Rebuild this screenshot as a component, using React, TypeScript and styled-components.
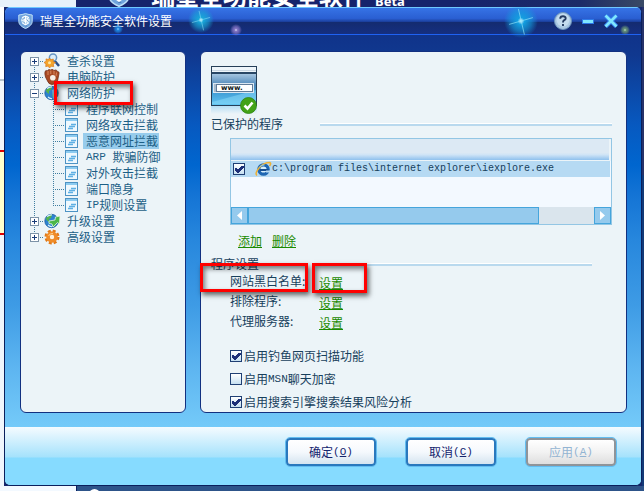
import React from "react";
import styled, { createGlobalStyle, css } from "styled-components";

const GlobalStyle = createGlobalStyle`
  * { box-sizing: border-box; }
  body {
    margin: 0;
    font: 12px/16px "Liberation Sans", "Noto Sans CJK SC", sans-serif;
    color: #17405c;
  }
  button, input { font: inherit; margin: 0; padding: 0; }
`;

const cjk = `"Noto Sans CJK SC", sans-serif`;

/* ---------- desktop behind the dialog ---------- */

const Desktop = styled.div`
  display: grid;
  grid-template-rows: 7px 1fr 5px;
  min-height: 100vh;
  background: #16266c;
`;

const BackStrip = styled.div`
  display: flex;
  align-items: flex-end;
  overflow: hidden;
  height: 7px;
  padding-left: 105px;
  background: linear-gradient(90deg, #e6f1fa 0 76px, #16236c 76px 70%, #1c2b68 90%, #3a4a66);
`;

const BackTitle = styled.span`
  margin-left: 18px;
  font: bold 24px/24px ${cjk};
  color: #fff;
  white-space: nowrap;
`;

const BackBeta = styled.span`
  margin-left: 8px;
  font: bold 13px/12px "Noto Sans", sans-serif;
  color: #fff;
`;

const Middle = styled.div`
  display: flex;
  padding: 0 2px 0 4px;
  background:
    linear-gradient(180deg, #fff 0 72px, #b8c4cc 72px 74px, #f2f6fa 74px 143px, #e00000 143px 145px, #ffffcc 145px 226px, #e00000 226px 228px, #f0f6fc 228px) left / 4px 100% no-repeat,
    linear-gradient(180deg, #27336a 0 35%, #123a78 35%) right / 2px 100% no-repeat;
`;

const BottomStrip = styled.div`
  overflow: hidden;
  height: 5px;
  padding-left: 89px;
  background: linear-gradient(90deg, #f3f9ff 0 76px, #0a2060 76px 77px, #2d5389 77px);
`;

const Bead = styled.span`
  display: block;
  width: 11px;
  height: 11px;
  margin-top: 3px;
  border-radius: 50%;
  background: #fff;
`;

/* ---------- dialog ---------- */

const Dialog = styled.section`
  display: flex;
  flex: 1;
  flex-direction: column;
  min-width: 0;
  border: 1px solid #0a1f5c;
  border-top: 0;
  border-radius: 6px;
  overflow: hidden;
  background: #86dbff;
`;

const TitleBar = styled.header`
  position: relative;
  display: flex;
  align-items: center;
  height: 28px;
  padding: 0 23px 0 13px;
  border-top: 1px solid #6fc8ff;
  border-bottom: 1px solid #1f62f2;
  background: linear-gradient(180deg, #3673e6, #2a5fd2 40%, #1c419f 52%, #142b6f 53%, #152f80);
`;

const Title = styled.h1`
  flex: 1;
  margin: 0 0 0 7px;
  font: 12px/16px ${cjk};
  color: #fff;
`;

const WindowButtons = styled.div`
  display: flex;
  align-items: center;
  gap: 10px;
  z-index: 1;
`;

const IconButton = styled.button`
  display: flex;
  border: 0;
  background: none;
  color: #7fe6ff;
`;

const Sparkle = styled.svg<{ $x: string; $top: number }>`
  position: absolute;
  left: ${(p) => p.$x};
  top: ${(p) => p.$top}px;
`;

const Body = styled.div`
  display: flex;
  flex: 1;
  gap: 14px;
  padding: 16px 14px 14px 15px;
  background: linear-gradient(180deg, #10338a 0, #10388f 20px, #0759c0 90px, #0066cf 130px, #1474d5 160px, #2787dd 205px, #3e9be5 270px, #5cb4f0 330px, #74caf9 392px);
`;

const panel = css`
  border: 1px solid #123080;
  border-radius: 6px;
  background: #ecf4f8;
`;

const Sidebar = styled.nav`
  ${panel}
  flex: none;
  width: 166px;
  padding: 1px 0 0 9px;
`;

const Content = styled.main`
  ${panel}
  flex: 1;
  min-width: 0;
  padding: 14px 14px 0 10px;
`;

/* ---------- tree ---------- */

const Tree = styled.ul`
  margin: 0;
  padding: 0;
  list-style: none;
`;

type Reach = "top" | "bottom" | "full";
const dotsDown = "repeating-linear-gradient(180deg, #3f7da0 0 1px, transparent 1px 2px)";
const dotsAcross = "repeating-linear-gradient(90deg, #3f7da0 0 1px, transparent 1px 2px)";

const TreeRow = styled.li`
  position: relative;
  display: flex;
  align-items: center;
  height: 16px;
  color: #1c5f86;
  font-family: ${cjk};
  white-space: nowrap;
`;

const Guide = styled.span<{ $reach: Reach; $width: number; $branch?: boolean; $x: number }>`
  display: flex;
  align-items: center;
  flex: none;
  width: ${(p) => p.$width}px;
  height: 16px;
  background:
    ${dotsDown} ${(p) => p.$x}px ${(p) => (p.$reach === "bottom" ? "8px" : "0")} / 1px
      ${(p) => ({ top: "8px", bottom: "8px", full: "16px" })[p.$reach]} no-repeat,
    ${dotsAcross} ${(p) => p.$x}px 8px / ${(p) => (p.$branch ? "20px" : "0")} 1px no-repeat;
`;

const Expander = styled.button`
  display: flex;
  width: 9px;
  height: 9px;
  border: 1px solid #7d93a8;
  background: #fff;
  color: #1a3c78;
`;

const TreeLabel = styled.a<{ $child?: boolean; $active?: boolean }>`
  display: flex;
  align-items: center;
  height: 16px;
  margin-left: ${(p) => (p.$child ? 5 : 3)}px;
  padding: 0 1px 0 3px;
  background: ${(p) => (p.$active ? "#97ccec" : "transparent")};
  color: inherit;
  text-decoration: none;
`;

const Latin = styled.span`
  font: 11px/12px "Liberation Mono", monospace;
`;

/* Red rectangle drawn over whatever it surrounds. */
const Highlight = styled.span<{ $left: number; $top: number; $width: number; $height: number }>`
  position: absolute;
  left: ${(p) => p.$left}px;
  top: ${(p) => p.$top}px;
  width: ${(p) => p.$width}px;
  height: ${(p) => p.$height}px;
  border: 3px solid #ff0000;
  box-shadow: 2px 3px 5px rgba(0, 0, 0, 0.6), inset 2px 3px 5px rgba(0, 0, 0, 0.5);
  pointer-events: none;
  z-index: 2;
`;

/* ---------- content ---------- */

const PictureRow = styled.div`
  display: flex;
  height: 48px;
`;

const Heading = styled.h2<{ $top: number; $end?: number }>`
  display: flex;
  align-items: center;
  gap: 37px;
  margin: ${(p) => p.$top}px ${(p) => p.$end ?? 0}px 0 0;
  font: 12px/16px ${cjk};

  &::after {
    content: "";
    flex: 1;
    height: 2px;
    border-top: 1px solid #fff;
    background: #b9d9ee;
  }
`;

const HeadingText = styled.span`
  width: 72px;
`;

const Indented = styled.div`
  margin-left: 19px;
`;

const ListBox = styled.div`
  display: flex;
  flex-direction: column;
  height: 87px;
  margin-top: 6px;
  border: 1px solid #93c6e4;
  background: #f3f9ff;
`;

const ProgramTable = styled.table`
  width: 100%;
  border-collapse: collapse;

  th {
    height: 21px;
    padding: 0;
    border-right: 2px solid #ecf4f8;
    border-bottom: 1px solid #ecf4f8;
    background: linear-gradient(180deg, #dce9f4 0 65%, #cfe4f6 75%, #8fc1ee);
  }
  td {
    height: 16px;
    padding: 0;
    background: #b6daf3;
  }
`;

const ProgramLabel = styled.label`
  display: flex;
  align-items: center;
  height: 16px;
  padding-left: 2px;
  font: 10px/16px "Liberation Mono", monospace;
  white-space: nowrap;

  svg { margin: 0 0 0 10px; }
`;

const CheckBox = styled.input`
  appearance: none;
  flex: none;
  width: 12px;
  height: 12px;
  border: 1px solid #1f3f74;
  background: linear-gradient(180deg, #fff, #c6e0f2);

  &:checked {
    background:
      linear-gradient(45deg, transparent 25%, #1c2f78 25% 75%, transparent 75%) 1px 4px / 4px 4px no-repeat,
      linear-gradient(135deg, transparent 34%, #1c2f78 34% 62%, transparent 62%) 3px 2px / 7px 7px no-repeat,
      linear-gradient(180deg, #fff, #c6e0f2);
  }
`;

const ScrollBar = styled.div`
  display: flex;
  height: 17px;
  margin-top: auto;
  background: #dae5ed;
`;

const scrollPiece = css`
  border: 1px solid #45a5dc;
  background: #95caed;
`;

const ScrollButton = styled.button`
  ${scrollPiece}
  display: flex;
  align-items: center;
  justify-content: center;
  width: 17px;
`;

const ScrollTrack = styled.div`
  flex: 1;
`;

const ScrollThumb = styled.div`
  ${scrollPiece}
  width: 84%;
  height: 17px;
`;

const Link = styled.a`
  height: 15px;
  border-bottom: 1px solid #1a8a00;
  font: 12px/15px ${cjk};
  color: #1a8a00;
  text-decoration: none;
`;

const LinkRow = styled.div`
  display: flex;
  gap: 10px;
  height: 16px;
  margin: 8px 0 0 27px;
`;

const Setting = styled.div`
  position: relative;
  display: grid;
  grid-template-columns: 89px auto;
  justify-content: start;
  align-items: center;
  height: 20px;
  font-family: ${cjk};
`;

const SettingName = styled.span`
  line-height: 16px;
  margin-bottom: 2px;
`;

const Options = styled.div`
  display: grid;
  gap: 7px;
  margin-top: 16px;
`;

const Option = styled.label`
  display: flex;
  align-items: center;
  gap: 2px;
  height: 16px;
  font-family: ${cjk};
`;

const OptionText = styled.span`
  display: flex;
  align-items: center;
`;

/* ---------- footer ---------- */

const Footer = styled.footer`
  display: flex;
  justify-content: flex-end;
  gap: 30px;
  height: 58px;
  padding: 11px 25px 0 0;
  background: linear-gradient(180deg, #f5fbff, #a5e2fc 30px, #86dbff 31px);
`;

const PushButton = styled.button`
  display: flex;
  align-items: center;
  justify-content: center;
  width: 90px;
  height: 28px;
  border: 2px solid #2a78bd;
  border-radius: 4px;
  outline: 1px solid #63bdf0;
  outline-offset: 0;
  background: linear-gradient(180deg, #fff, #f5f9fd 50%, #d5e4f0);
  color: #14246e;
  font-family: ${cjk};

  &:disabled {
    border-color: #8f9499;
    background: linear-gradient(180deg, #fff, #f2f2f2 50%, #dedede);
    color: #93b4d2;
  }
`;

/* ---------- drawings ---------- */

const Shield = ({ width = 15, height = 16 }: { width?: number; height?: number }) => (
  <svg width={width} height={height} viewBox="0 0 15 16" aria-hidden="true">
    <path d="M.8 2 4 1.500 7.500.6 11 1.500 14.200 2v6.500c0 3-3 5.500-6.700 7C3.800 14 .8 11.500.8 8.500z" fill="#6fa3dc" stroke="#bfe0f8" />
    <circle cx="7.500" cy="7.300" r="4.400" fill="#b8daf2" />
    <path d="M4 4.500 7.500 3 11 4.500M3.500 7h8M4.500 10l3 2 3-2M7.500 3v9M4.500 4.500l6 5.500M10.500 4.500 4.500 10" stroke="#fff" fill="none" />
    <path d="M4.500 6.500 7 4.500M8.500 6.500l2 2M5 8.500l2 2M7 13h2" stroke="#4b7cba" strokeWidth=".7" />
  </svg>
);

const Star = ({ x, y, r, color, rays }: { x: string; y: number; r: number; color: string; rays?: boolean }) => {
  const id = `glow${r}${color.slice(1)}`;
  return (
    <Sparkle $x={x} $top={y} width={r * 2} height={r * 2} viewBox="-10 -10 20 20" aria-hidden="true">
      <radialGradient id={id}>
        <stop offset="0" stopColor="#e4faff" />
        <stop offset=".2" stopColor={color} />
        <stop offset=".6" stopColor={color} stopOpacity=".6" />
        <stop offset="1" stopColor={color} stopOpacity="0" />
      </radialGradient>
      <circle r="10" fill={`url(#${id})`} />
      {rays && <path d="M-7 2 7-2M-1.500-7 2 8" stroke="#8fe4fa" strokeWidth=".4" />}
    </Sparkle>
  );
};

const ScanIcon = () => (
  <svg width="17" height="16" viewBox="0 0 17 16" aria-hidden="true">
    <path d="m10 7 5 6" stroke="#2d5088" strokeWidth="2.500" />
    <circle cx="9" cy="4.500" r="3.600" fill="#dceefa" stroke="#6795c4" strokeWidth="1.500" />
    <path d="m5.500 5 1.300 1.800 2.500-.8-.2 2.500 2.400 1-2.200 1.600.4 2.500-2.500-.4L5.500 15l-1.300-1.900-2.500.5.300-2.600L0 9.500l2.200-1.300L2 5.900l2.500.7z" fill="#f5a42b" stroke="#d8781a" strokeWidth=".7" />
    <circle cx="5.500" cy="9.800" r="1.500" fill="#ffe6a4" />
  </svg>
);

const GloveIcon = () => (
  <svg width="17" height="16" viewBox="0 0 17 16" aria-hidden="true">
    <path d="M1 2.500Q2 .8 3.500 2L4 1Q5.500 0 6.500 1L8 .5q1.500 0 2 1L11.500 1Q13 1 13.500 2.500q2 0 1.500 2L13.500 12q-2 3.500-5.500 3.500T3 11L1.500 8Q.5 5 1 2.500z" fill="#a94a24" stroke="#71301a" strokeWidth=".8" />
    <path d="M4 2v4M6.800 1.500V5M10 2v3.500M12.500 3.500 12 7" stroke="#da8a60" />
    <circle cx="8.800" cy="8.800" r="2.800" fill="#f7efe8" />
  </svg>
);

const GlobeIcon = ({ arrow }: { arrow?: boolean }) => (
  <svg width="17" height="16" viewBox="0 0 17 16" aria-hidden="true">
    <circle cx="7.500" cy="8" r="6.700" fill="#2d83cf" stroke="#1c5ca0" strokeWidth=".8" />
    <path d="M2 5q3-4 6-3.500L7 5 5 6v3L2.500 7zM9 8l4-1 .5 3-3 3.500L8.500 11z" fill="#54b34c" />
    <path d="M3 3.500Q6 1.500 8 2M4 12q2 2 4 1.500" stroke="#d6f0ff" strokeWidth="1.200" fill="none" />
    {arrow ? (
      <path d="m5 8 6-1 .5-3L16 3l-.5 8-2-1.500L9 14l-1-3-3-.5z" fill="#4cb748" stroke="#eaf7df" strokeWidth=".8" />
    ) : (
      <path d="M8 5 13 3v5q0 4-4 6" fill="#9cc8e4" opacity=".6" />
    )}
  </svg>
);

const GearIcon = () => (
  <svg width="17" height="16" viewBox="0 0 17 16" aria-hidden="true">
    <circle cx="8" cy="8" r="6" fill="none" stroke="#e17a18" strokeWidth="3" strokeDasharray="2.800 1.910" />
    <circle cx="8" cy="8" r="4" fill="#fff3dd" stroke="#f08c28" strokeWidth="3.600" />
    <path d="M4.500 7Q6 4 9 4.500" stroke="#ffd28e" fill="none" />
  </svg>
);

const PageIcon = () => (
  <svg width="13" height="14" viewBox="0 0 13 14" aria-hidden="true">
    <rect x=".5" y=".5" width="12" height="13" fill="#eef8fe" stroke="#4d93c4" />
    <path d="M1 2h11" stroke="#8ccbf0" strokeWidth="2" />
    <path d="M6 6.500h5M4 8.500h6M3 10.500h5" stroke="#5fb0e4" strokeWidth="1.300" />
  </svg>
);

const IEIcon = () => (
  <svg width="17" height="16" viewBox="0 0 17 16" aria-hidden="true">
    <circle cx="8.500" cy="8.500" r="4.700" fill="#d6effd" stroke="#1d66b2" strokeWidth="3.200" />
    <path d="M5 9h8.500" stroke="#164f92" strokeWidth="2" />
    <path d="M11 10.500h4.500" stroke="#b6daf3" strokeWidth="1.800" />
    <path d="M2 14.500Q-.5 12.500 4 7T15 1.500Q16.500 2.500 14.500 5" stroke="#eeb133" strokeWidth="1.500" fill="none" />
    <path d="M4.500 6Q7 3.500 9.500 4" stroke="#85ccf4" fill="none" />
  </svg>
);

const BrowserPicture = () => (
  <svg width="47" height="48" viewBox="0 0 47 48" aria-hidden="true">
    <defs>
      <linearGradient id="screen" x2="0" y2="1">
        <stop offset="0" stopColor="#b4d0e8" />
        <stop offset=".4" stopColor="#4d86b8" />
        <stop offset=".6" stopColor="#3f9bd4" />
        <stop offset="1" stopColor="#62c5f2" />
      </linearGradient>
      <linearGradient id="mirror" x2="0" y2="1">
        <stop offset="0" stopColor="#b8dff5" />
        <stop offset="1" stopColor="#ecf4f8" />
      </linearGradient>
    </defs>
    <rect y="40" width="46" height="8" fill="url(#mirror)" />
    <rect x=".5" y=".5" width="45" height="39" fill="#eef5fa" stroke="#263f58" />
    <path d="M1 4.500h44" stroke="#cbd8e4" />
    <rect x="1" y="6" width="44" height="33" fill="url(#screen)" />
    <path d="M1 7h44" stroke="#294766" strokeWidth="2" />
    <path d="m1 36 44-12v14H1z" fill="#8cdcf9" opacity=".5" />
    <rect x="2.500" y="17.500" width="40" height="9" fill="#a7bacd" stroke="#dce8f2" />
    <rect x="5.500" y="18.500" width="36" height="7" fill="#fff" stroke="#607b98" />
    <text x="10" y="24" fontFamily="DejaVu Sans" fontWeight="bold" fontSize="7" fill="#101820">www.</text>
    <circle cx="37.500" cy="39.500" r="8" fill="#43a318" stroke="#2e8514" strokeWidth=".8" />
    <path d="m33.500 39.500 3 3 5-6" fill="none" stroke="#fff" strokeWidth="2.600" />
  </svg>
);

/* ---------- data ---------- */

type Node = { label: React.ReactNode; icon?: React.ReactNode; open?: boolean; child?: boolean; active?: boolean; marked?: boolean };

const nodes: Node[] = [
  { label: "查杀设置", icon: <ScanIcon /> },
  { label: "电脑防护", icon: <GloveIcon /> },
  { label: "网络防护", icon: <GlobeIcon />, open: true, marked: true },
  { label: "程序联网控制", child: true },
  { label: "网络攻击拦截", child: true },
  { label: "恶意网址拦截", child: true, active: true },
  { label: <><Latin>ARP&nbsp;</Latin>欺骗防御</>, child: true },
  { label: "对外攻击拦截", child: true },
  { label: "端口隐身", child: true },
  { label: <><Latin>IP</Latin>规则设置</>, child: true },
  { label: "升级设置", icon: <GlobeIcon arrow /> },
  { label: "高级设置", icon: <GearIcon /> },
];

const settings = ["网站黑白名单:", "排除程序:", "代理服务器:"];

const options: { label: React.ReactNode; on: boolean }[] = [
  { label: "启用钓鱼网页扫描功能", on: true },
  { label: <>启用<Latin>MSN</Latin>聊天加密</>, on: false },
  { label: "启用搜索引擎搜索结果风险分析", on: true },
];

const actions = [
  { label: "确定", hotkey: "O" },
  { label: "取消", hotkey: "C" },
  { label: "应用", hotkey: "A", disabled: true },
];

const TreeItem = ({ node, first, last, lastChild }: { node: Node; first: boolean; last: boolean; lastChild: boolean }) =>
  node.child ? (
    <TreeRow>
      <Guide $reach="full" $width={15} $x={4} />
      <Guide $reach={lastChild ? "top" : "full"} $width={20} $x={8} $branch />
      <PageIcon />
      <TreeLabel href="#" $child $active={node.active}>{node.label}</TreeLabel>
    </TreeRow>
  ) : (
    <TreeRow>
      <Guide $reach={first ? "bottom" : last ? "top" : "full"} $width={14} $x={4} $branch>
        <Expander aria-label={node.open ? "收起" : "展开"}>
          <svg width="7" height="7" viewBox="0 0 7 7">
            <path d={node.open ? "M1 3.500h5" : "M1 3.500h5M3.500 1v5"} stroke="currentColor" />
          </svg>
        </Expander>
      </Guide>
      {node.icon}
      <TreeLabel href="#">{node.label}</TreeLabel>
      {node.marked && <Highlight $left={24} $top={-4} $width={79} $height={24} />}
    </TreeRow>
  );

export default function App() {
  return (
    <>
      <GlobalStyle />
      <Desktop>
        <BackStrip>
          <Shield width={28} height={24} />
          <BackTitle>瑞星全功能安全软件</BackTitle>
          <BackBeta>Beta</BackBeta>
        </BackStrip>
        <Middle>
          <Dialog>
            <TitleBar>
              <Star x="108px" y={16} r={5} color="#1f8ce8" />
              <Star x="183px" y={-1} r={13} color="#18a6d8" rays />
              <Star x="225px" y={16} r={6} color="#8a78c8" />
              <Star x="calc(100% - 137px)" y={-4} r={17} color="#139fe0" rays />
              <Star x="calc(100% - 21px)" y={17} r={5} color="#6d9a78" />
              <Shield />
              <Title>瑞星全功能安全软件设置</Title>
              <WindowButtons>
                <IconButton aria-label="帮助">
                  <svg width="18" height="18" viewBox="0 0 18 18">
                    <circle cx="9" cy="9" r="8.500" fill="#a9c8e2" stroke="#6c93bc" />
                    <circle cx="9" cy="8" r="6.500" fill="#c4dcee" />
                    <path d="M6.300 6.800V6q.3-1.700 2.700-1.700T11.700 6.200q0 1.300-1.500 2Q9 8.800 9 10.500M9 12v2" fill="none" stroke="#233a60" strokeWidth="1.900" />
                  </svg>
                </IconButton>
                <IconButton aria-label="最小化">
                  <svg width="12" height="16" viewBox="0 0 12 16">
                    <rect x=".5" y="6.500" width="11" height="4" fill="currentColor" stroke="#2d78e8" />
                  </svg>
                </IconButton>
                <IconButton aria-label="关闭">
                  <svg width="14" height="14" viewBox="0 0 14 14">
                    <path d="m1.500 1.500 11 11M12.500 1.500l-11 11" stroke="#2d78e8" strokeWidth="4.500" />
                    <path d="m1.500 1.500 11 11M12.500 1.500l-11 11" stroke="currentColor" strokeWidth="2.800" />
                  </svg>
                </IconButton>
              </WindowButtons>
            </TitleBar>
            <Body>
              <Sidebar>
                <Tree>
                  {nodes.map((node, i) => (
                    <TreeItem
                      key={i}
                      node={node}
                      first={i === 0}
                      last={i === nodes.length - 1}
                      lastChild={!!node.child && !nodes[i + 1]?.child}
                    />
                  ))}
                </Tree>
              </Sidebar>
              <Content>
                <PictureRow><BrowserPicture /></PictureRow>
                <Heading $top={2}><HeadingText>已保护的程序</HeadingText></Heading>
                <Indented>
                  <ListBox>
                    <ProgramTable>
                      <thead><tr><th aria-label="程序" /></tr></thead>
                      <tbody>
                        <tr>
                          <td>
                            <ProgramLabel>
                              <CheckBox type="checkbox" defaultChecked />
                              <IEIcon />
                              c:\program files\internet explorer\iexplore.exe
                            </ProgramLabel>
                          </td>
                        </tr>
                      </tbody>
                    </ProgramTable>
                    <ScrollBar>
                      <ScrollButton aria-label="向左">
                        <svg width="5" height="9" viewBox="0 0 5 9"><path d="M5 0v9L0 4.500z" fill="#fff" /></svg>
                      </ScrollButton>
                      <ScrollTrack><ScrollThumb /></ScrollTrack>
                      <ScrollButton aria-label="向右">
                        <svg width="5" height="9" viewBox="0 0 5 9"><path d="M0 0v9l5-4.500z" fill="#fff" /></svg>
                      </ScrollButton>
                    </ScrollBar>
                  </ListBox>
                </Indented>
                <LinkRow>
                  <Link href="#">添加</Link>
                  <Link href="#">删除</Link>
                </LinkRow>
                <Heading $top={7} $end={20}><HeadingText>程序设置</HeadingText></Heading>
                <Indented>
                  {settings.map((name, i) => (
                    <Setting key={name}>
                      <SettingName>{name}</SettingName>
                      <Link href="#" aria-label={`${name}设置`}>设置</Link>
                      {i === 0 && (
                        <>
                          <Highlight $left={-30} $top={-9} $width={108} $height={29} />
                          <Highlight $left={82} $top={-9} $width={55} $height={30} />
                        </>
                      )}
                    </Setting>
                  ))}
                  <Options>
                    {options.map((option, i) => (
                      <Option key={i}>
                        <CheckBox type="checkbox" defaultChecked={option.on} />
                        <OptionText>{option.label}</OptionText>
                      </Option>
                    ))}
                  </Options>
                </Indented>
              </Content>
            </Body>
            <Footer>
              {actions.map((action) => (
                <PushButton key={action.hotkey} disabled={action.disabled}>
                  {action.label}
                  <Latin>(<u>{action.hotkey}</u>)</Latin>
                </PushButton>
              ))}
            </Footer>
          </Dialog>
        </Middle>
        <BottomStrip><Bead /></BottomStrip>
      </Desktop>
    </>
  );
}
